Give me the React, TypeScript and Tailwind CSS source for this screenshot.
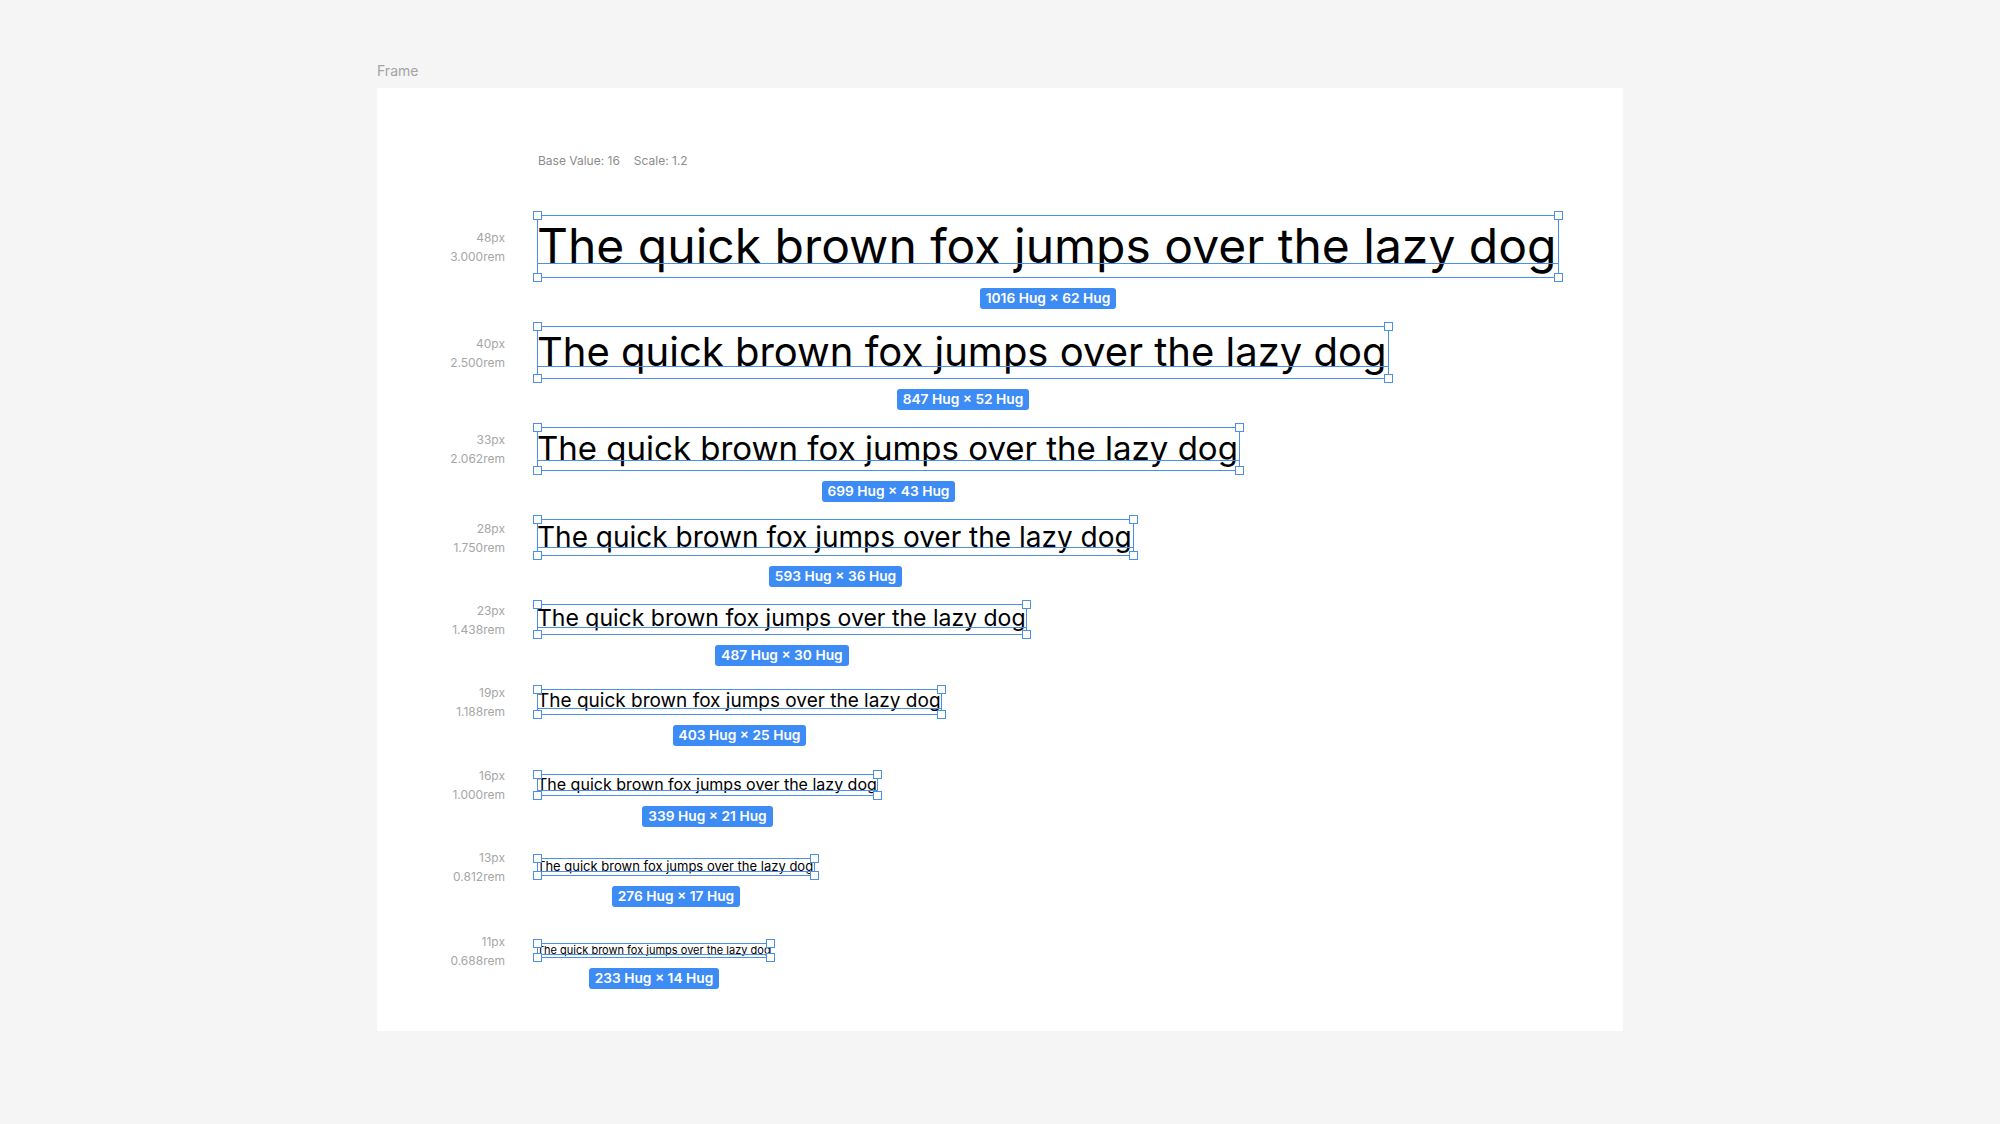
import type { ReactNode } from "react";

type ScaleRow = {
  px: string;
  rem: string;
  size: string;
  box: string;
  labelHeight: string;
  baseline: string;
  badge: string;
};

// one entry per step of the type scale (base 16, ratio 1.2)
const rows: ScaleRow[] = [
  { px: "48px", rem: "3.000rem", size: "text-[48px]", box: "w-[1022px] h-[63px]", labelHeight: "h-[63px]", baseline: "top-[48px]", badge: "1016 Hug × 62 Hug" },
  { px: "40px", rem: "2.500rem", size: "text-[40px]", box: "w-[852px] h-[53px]", labelHeight: "h-[53px]", baseline: "top-[40px]", badge: "847 Hug × 52 Hug" },
  { px: "33px", rem: "2.062rem", size: "text-[33px]", box: "w-[703px] h-[44px]", labelHeight: "h-[44px]", baseline: "top-[33px]", badge: "699 Hug × 43 Hug" },
  { px: "28px", rem: "1.750rem", size: "text-[28px]", box: "w-[597px] h-[37px]", labelHeight: "h-[37px]", baseline: "top-[28px]", badge: "593 Hug × 36 Hug" },
  { px: "23px", rem: "1.438rem", size: "text-[23px]", box: "w-[490px] h-[31px]", labelHeight: "h-[31px]", baseline: "top-[23px]", badge: "487 Hug × 30 Hug" },
  { px: "19px", rem: "1.188rem", size: "text-[19px]", box: "w-[405px] h-[26px]", labelHeight: "h-[26px]", baseline: "top-[19px]", badge: "403 Hug × 25 Hug" },
  { px: "16px", rem: "1.000rem", size: "text-[16px]", box: "w-[341px] h-[22px]", labelHeight: "h-[22px]", baseline: "top-[16px]", badge: "339 Hug × 21 Hug" },
  { px: "13px", rem: "0.812rem", size: "text-[13px]", box: "w-[278px] h-[18px]", labelHeight: "h-[18px]", baseline: "top-[13px]", badge: "276 Hug × 17 Hug" },
  { px: "11px", rem: "0.688rem", size: "text-[11px]", box: "w-[234px] h-[15px]", labelHeight: "h-[15px]", baseline: "top-[11px]", badge: "233 Hug × 14 Hug" },
];

const SAMPLE = "The quick brown fox jumps over the lazy dog";

function Handle({ className }: { className: string }) {
  return <span className={`absolute h-[9px] w-[9px] border border-[#4b8fe8] bg-white ${className}`} />;
}

function SelectionBox({ row, children }: { row: ScaleRow; children: ReactNode }) {
  return (
    <div className={`relative shadow-[inset_0_0_0_1px_#4b8fe8] ${row.box}`}>
      {children}
      <span className={`absolute left-0 right-0 h-px bg-[#4b8fe8] ${row.baseline}`} />
      <Handle className="left-[-4px] top-[-4px]" />
      <Handle className="right-[-4px] top-[-4px]" />
      <Handle className="bottom-[-4px] left-[-4px]" />
      <Handle className="bottom-[-4px] right-[-4px]" />
    </div>
  );
}

function ScaleStep({ row }: { row: ScaleRow }) {
  return (
    <div className="flex min-h-[67.75px] items-start">
      <div className={`flex w-[128px] shrink-0 flex-col items-end justify-center ${row.labelHeight}`}>
        <span className="text-[12px] leading-[19px] text-[#a6a6a6]">{row.px}</span>
        <span className="text-[12px] leading-[19px] text-[#a6a6a6]">{row.rem}</span>
      </div>
      <div className="ml-[32px] flex flex-col items-center">
        <SelectionBox row={row}>
          <p className={`whitespace-nowrap leading-[1.3] text-black ${row.size}`}>{SAMPLE}</p>
        </SelectionBox>
        <div className="mt-[10px] flex h-[21px] items-center rounded-[3px] bg-[#3d8bf4] px-[6px] text-[13.75px] font-semibold text-white">
          {row.badge}
        </div>
      </div>
    </div>
  );
}

export default function App() {
  return (
    <main
      className="min-h-screen bg-[#f5f5f5] pl-[377px] pt-[62px]"
      style={{ fontFamily: "Inter, 'Noto Sans', sans-serif" }}
    >
      <div className="text-[14px] leading-[17px] text-[#a3a3a3]">Frame</div>
      <section className="mt-[9px] h-[943px] w-[1246px] bg-white pt-[65px]">
        <div className="flex gap-[14px] pl-[161px] text-[12px] leading-[15px] text-[#8c8c8c]">
          <span>Base Value: 16</span>
          <span>Scale: 1.2</span>
        </div>
        <div className="mt-[47px] flex flex-col gap-[17px]">
          {rows.map((row) => (
            <ScaleStep key={row.px} row={row} />
          ))}
        </div>
      </section>
    </main>
  );
}
